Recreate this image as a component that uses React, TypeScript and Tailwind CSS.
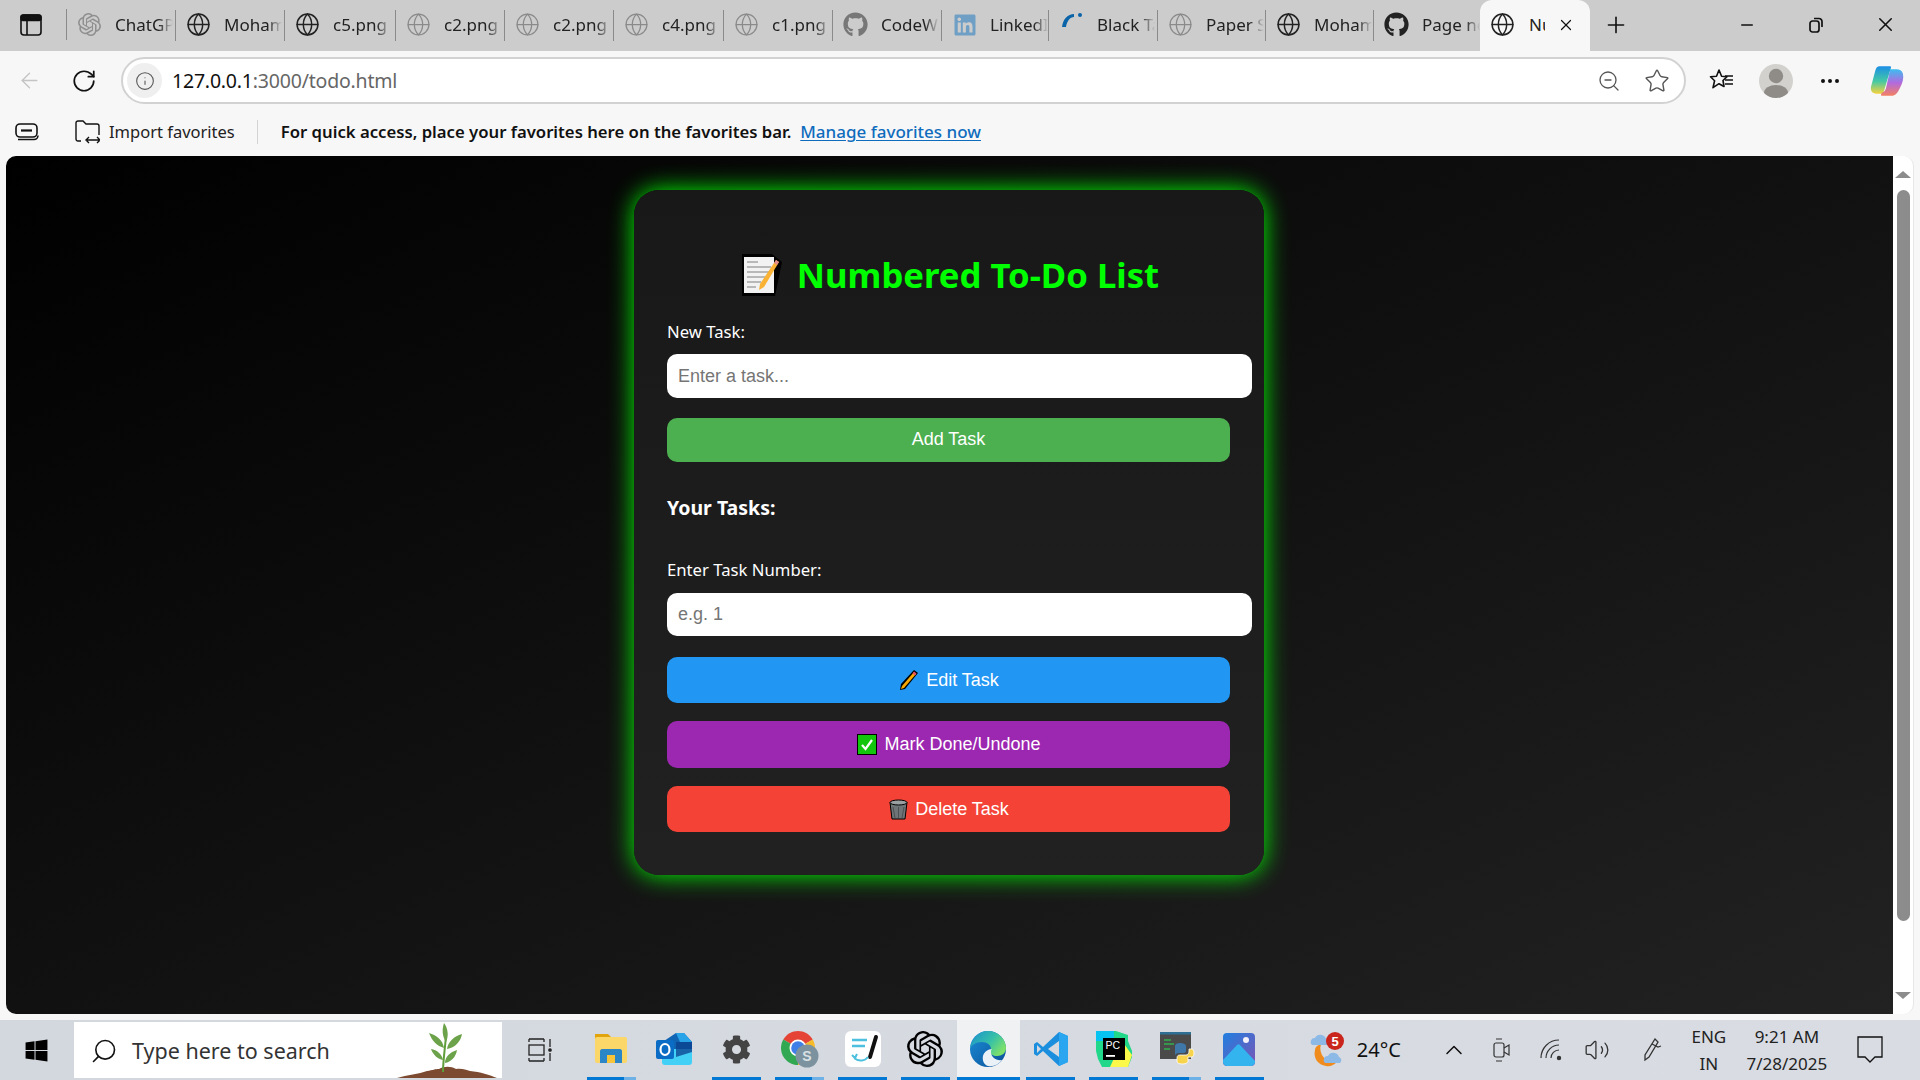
import React from 'react';
import { Globe, ArrowLeft, RotateCw, Info, ZoomOut, Star, Plus, X, Minus, Search, ChevronUp, Volume2, MoreHorizontal } from 'lucide-react';
import { FaGithub, FaLinkedin, FaWindows, FaCog } from 'react-icons/fa';
import { SiOpenai } from 'react-icons/si';

const GlobeDark = () => <Globe size={25} strokeWidth={1.4} className="text-[#222]" />;
const GlobeFaded = () => <Globe size={25} strokeWidth={1.2} className="text-[#8a8a8a]" />;

const BlackTabIcon = () => (
  <svg width="24" height="24" viewBox="0 0 24 24" className="-mt-2">
    <path d="M2 18 C3 10 8 5 14 5 L14 8 C10 8 7 12 6 18 Z" fill="#0b63a8" />
    <circle cx="20" cy="6" r="2" fill="#0b63a8" />
  </svg>
);

type Tab = { title: string; icon: React.ReactNode; width: string };

const tabs: Tab[] = [
  { title: 'ChatGPT', icon: <SiOpenai size={23} className="text-[#8f8f8f]" />, width: 'w-[109px]' },
  { title: 'Mohamed', icon: <GlobeDark />, width: 'w-[109px]' },
  { title: 'c5.png', icon: <GlobeDark />, width: 'w-[111px]' },
  { title: 'c2.png', icon: <GlobeFaded />, width: 'w-[109px]' },
  { title: 'c2.png', icon: <GlobeFaded />, width: 'w-[109px]' },
  { title: 'c4.png', icon: <GlobeFaded />, width: 'w-[110px]' },
  { title: 'c1.png', icon: <GlobeFaded />, width: 'w-[109px]' },
  { title: 'CodeWars', icon: <FaGithub size={25} className="text-[#777]" />, width: 'w-[109px]' },
  { title: 'LinkedIn', icon: <FaLinkedin size={24} className="text-[#6f9fc4]" />, width: 'w-[107px]' },
  { title: 'Black Tab', icon: <BlackTabIcon />, width: 'w-[109px]' },
  { title: 'Paper Sub', icon: <GlobeFaded />, width: 'w-[108px]' },
  { title: 'Mohamed', icon: <GlobeDark />, width: 'w-[108px]' },
  { title: 'Page not', icon: <FaGithub size={25} className="text-[#222]" />, width: 'w-[107px]' },
];

const PanelIcon = () => (
  <svg width="22" height="22" viewBox="0 0 22 22" fill="none" stroke="#111" strokeWidth="1.6">
    <rect x="1" y="1" width="20" height="20" rx="3" />
    <rect x="1" y="1" width="20" height="5.5" rx="2" fill="#111" />
    <path d="M7 6.5V21" />
  </svg>
);

const TabStrip = () => (
  <div className="flex h-[51px] shrink-0 bg-[#cccccc] text-[17px] text-[#222]">
    <div className="flex w-[67px] items-center pl-[20px] pb-[2px]">
      <PanelIcon />
      <div className="ml-[24px] h-[31px] w-[1px] bg-[#8a8a8a]" />
    </div>
    {tabs.map((t, i) => (
      <div key={i} className={`flex items-center pl-[10px] ${t.width} relative pb-[2px]`}>
        <div className="flex w-[25px] shrink-0 justify-center">{t.icon}</div>
        <span className="ml-[13px] w-[58px] overflow-hidden whitespace-nowrap [mask-image:linear-gradient(to_right,black_75%,transparent_100%)]">{t.title}</span>
        {i < tabs.length - 1 && <div className="absolute right-0 top-[10px] h-[31px] w-[1px] bg-[#8a8a8a]" />}
      </div>
    ))}
    <div className="ml-[-1px] flex h-[51px] w-[110px] items-center rounded-t-[12px] bg-[#f7f7f7] pl-[10px] pb-[2px]">
      <GlobeDark />
      <span className="ml-[14px] w-[16px] overflow-hidden whitespace-nowrap">Nu</span>
      <X size={18} strokeWidth={1.6} className="ml-[12px] text-[#111]" />
    </div>
    <div className="ml-[13px] flex items-center pb-[2px]">
      <Plus size={26} strokeWidth={1.5} className="text-[#111]" />
    </div>
    <div className="ml-auto flex items-center pb-[2px] pr-[23px]">
      <Minus size={18} strokeWidth={2} className="text-[#111]" />
      <svg width="16" height="18" viewBox="0 0 16 18" fill="none" stroke="#111" strokeWidth="1.7" className="ml-[52px]">
        <rect x="2" y="5" width="9" height="11" rx="2.5" />
        <path d="M6 2.5h5a3 3 0 0 1 3 3V11" />
      </svg>
      <X size={23} strokeWidth={1.6} className="ml-[50px] text-[#111]" />
    </div>
  </div>
);

const FavoritesStar = () => (
  <svg width="26" height="26" viewBox="0 0 26 26" fill="none" stroke="#111" strokeWidth="1.6">
    <path d="M10 2l2.6 6.2 5.4.5-4 3.8 1 6-5-2.8-6 4 1.6-7L1.5 8.7l6-.5z" strokeLinejoin="round" />
    <path d="M16 12h8M16 16h8M16 8h8" />
  </svg>
);

const Avatar = () => (
  <div className="flex h-[34px] w-[34px] items-end justify-center overflow-hidden rounded-full bg-[#d2d1ce]">
    <svg width="34" height="34" viewBox="0 0 34 34" fill="#8f8c88">
      <circle cx="17" cy="12" r="7.2" />
      <ellipse cx="17" cy="29" rx="12" ry="8" />
    </svg>
  </div>
);

const CopilotIcon = () => (
  <svg width="36" height="36" viewBox="0 0 34 34">
    <defs>
      <linearGradient id="cpA" x1="0" y1="0" x2="0" y2="1">
        <stop offset="0" stopColor="#1b8ee6" />
        <stop offset="0.55" stopColor="#45c9a4" />
        <stop offset="1" stopColor="#f6d33c" />
      </linearGradient>
      <linearGradient id="cpB" x1="0" y1="0" x2="0" y2="1">
        <stop offset="0" stopColor="#3dbdf0" />
        <stop offset="0.5" stopColor="#b06ae0" />
        <stop offset="1" stopColor="#f58060" />
      </linearGradient>
    </defs>
    <path d="M10 3h10c1 0 1 1 .6 2L14 27c-.5 1.500-1.500 2-3 2H7c-4 0-6-3-5-7l4-15c.6-2.500 2-4 4-4z" fill="url(#cpA)" />
    <path d="M20 6h6c3 0 5 1 6 4 1 4 0 9-3 14-2 4-4 7-8 7h-8c-2 0-2-1-1-3 2-.5 3-1.500 4-4z" fill="url(#cpB)" />
  </svg>
);

const Toolbar = () => (
  <div className="flex h-[59px] shrink-0 items-start bg-[#f7f7f7] pt-[6px]">
    <div className="flex h-[47px] w-[121px] shrink-0 items-center pl-[17px]">
      <ArrowLeft size={25} strokeWidth={1.3} className="text-[#c4c4c4]" />
      <RotateCw size={26} strokeWidth={1.6} className="ml-[29px] text-[#111]" />
    </div>
    <div className="flex h-[47px] w-[1565px] items-center rounded-full border-2 border-[#d2d2d2] bg-white pl-[4px]">
      <div className="flex h-[35px] w-[35px] items-center justify-center rounded-full bg-[#efefef]">
        <Info size={20} strokeWidth={1.3} className="text-[#555]" />
      </div>
      <span className="ml-[10px] pt-[1px] text-[19.5px] tracking-[-0.2px] text-[#111]">
        127.0.0.1<span className="text-[#666]">:3000/todo.html</span>
      </span>
      <div className="ml-auto flex items-center pr-[14px]">
        <ZoomOut size={24} strokeWidth={1.3} className="text-[#555]" />
        <Star size={26} strokeWidth={1.3} className="ml-[23px] text-[#555]" />
      </div>
    </div>
    <div className="flex h-[47px] flex-1 items-center pl-[23px]">
      <FavoritesStar />
      <div className="ml-[24px]"><Avatar /></div>
      <MoreHorizontal size={24} strokeWidth={2} className="ml-[25px] text-[#111]" />
      <div className="ml-[27px]"><CopilotIcon /></div>
    </div>
  </div>
);

const FavoritesBar = () => (
  <div className="flex h-[46px] shrink-0 items-center bg-[#f7f7f7] pb-[2px] text-[16.5px] text-[#222]">
    <svg width="24" height="18" viewBox="0 0 24 18" fill="none" stroke="#111" strokeWidth="1.6" className="ml-[15px]">
      <rect x="1" y="1" width="21" height="13" rx="4" />
      <path d="M6 7.500h11" strokeWidth="2.200" />
      <path d="M3 16.500h16a4 4 0 0 0 4-4" />
    </svg>
    <svg width="25" height="24" viewBox="0 0 25 24" fill="none" stroke="#111" strokeWidth="1.4" className="ml-[36px]">
      <path d="M6 21H3a2 2 0 0 1-2-2V3a2 2 0 0 1 2-2h5l3 3h11a2 2 0 0 1 2 2v9" />
      <path d="M12 20h12M14 17l-3 3 3 3M22 17l3 3-3 3" />
    </svg>
    <span className="ml-[9px]">Import favorites</span>
    <div className="ml-[22px] h-[24px] w-[1px] bg-[#d4d4d4]" />
    <span className="ml-[23px] text-[16.7px] font-semibold text-[#111]">For quick access, place your favorites here on the favorites bar.</span>
    <span className="ml-[9px] text-[17px] font-medium text-[#0f6cbd] underline underline-offset-2">Manage favorites now</span>
  </div>
);

const MemoEmoji = () => (
  <svg width="40" height="42" viewBox="0 0 40 42">
    <path d="M0 0h30l10 8-7 34H0z" fill="#000" />
    <rect x="2" y="3" width="30" height="36" fill="#f2f2f2" />
    <path d="M5 8h11M5 13h24M5 18h24M5 23h18M5 28h14M5 33h9" stroke="#b8b8b8" strokeWidth="1.800" />
    <path d="M34 6l3 2-15 25-5 3 1-6z" fill="#f9b233" />
    <path d="M34 6l3 2-2 3-3-2z" fill="#e08a8a" />
  </svg>
);

const PencilEmoji = () => (
  <svg width="20" height="22" viewBox="0 0 20 22">
    <path d="M15 1l4 3L6 20l-5 1 1-6z" fill="#000" />
    <path d="M15 3l2 2L5 19l-3 1 1-3z" fill="#f7a800" />
    <path d="M15 2.500l2.500 2-1.500 2-2.500-2z" fill="#e8506a" />
  </svg>
);

const CheckEmoji = () => (
  <svg width="20" height="21" viewBox="0 0 20 21">
    <rect x="0.500" y="0.500" width="19" height="20" fill="#12c60e" stroke="#000" />
    <path d="M5 11l3.500 4L15 6" fill="none" stroke="#fff" strokeWidth="2.200" />
  </svg>
);

const TrashEmoji = () => (
  <svg width="19" height="21" viewBox="0 0 19 21">
    <path d="M1 3.500h17L16 20H3z" fill="#6f7577" stroke="#000" />
    <ellipse cx="9.500" cy="3.500" rx="8.500" ry="2.500" fill="#9aa0a2" stroke="#000" />
    <path d="M4 8l2 11M9.500 8v11M15 8l-2 11" stroke="#4b5052" strokeWidth="1" />
  </svg>
);

const inputClass = "block w-[585px] rounded-[10px] bg-white pl-[11px] font-['Liberation_Sans',Arial,sans-serif] text-[18px] text-black placeholder:text-[#757575]";
const buttonClass = "flex w-[563px] items-center justify-center gap-[7px] rounded-[10px] font-['Liberation_Sans',Arial,sans-serif] text-[18px] text-white";

const TodoCard = () => (
  <div className="w-[630px] self-start rounded-[25px] bg-[linear-gradient(to_bottom,#181818,#212121)] px-[33px] pb-[43px] pt-[58px] shadow-[0_0_24px_#00ff00]">
    <h1 className="flex h-[54px] items-center justify-center gap-[15px] pl-[3px] text-[34.7px] font-bold text-[#00ff00]">
      <MemoEmoji />
      <span>Numbered To-Do List</span>
    </h1>
    <label htmlFor="task" className="mt-[18px] block h-[24px] text-[16.7px] leading-[24px] text-white">New Task:</label>
    <input id="task" placeholder="Enter a task..." className={`mt-[10px] h-[44px] ${inputClass}`} />
    <button className={`mt-[20px] h-[44px] bg-[#4caf50] pb-[2px] ${buttonClass}`}>Add Task</button>
    <h3 className="mt-[33px] h-[24px] pt-[1px] text-[19.5px] font-bold leading-[24px] text-white">Your Tasks:</h3>
    <label htmlFor="num" className="mt-[39px] block h-[24px] text-[16.7px] leading-[24px] text-white">Enter Task Number:</label>
    <input id="num" placeholder="e.g. 1" className={`mt-[11px] h-[43px] ${inputClass}`} />
    <button className={`mt-[21px] h-[46px] bg-[#2196f3] pl-[1px] ${buttonClass}`}><PencilEmoji />Edit Task</button>
    <button className={`mt-[18px] h-[47px] bg-[#9c27b0] pl-[1px] ${buttonClass}`}><CheckEmoji />Mark Done/Undone</button>
    <button className={`mt-[18px] h-[46px] bg-[#f44336] pl-[1px] ${buttonClass}`}><TrashEmoji />Delete Task</button>
  </div>
);

const Scrollbar = () => (
  <div className="flex w-[21px] shrink-0 flex-col items-center rounded-r-[10px] border-r border-[#e6e6e6] bg-white pt-[15px] pb-[15px]">
    <div className="h-0 w-0 border-x-[8px] border-b-[7px] border-x-transparent border-b-[#8c8c8c]" />
    <div className="mt-[12px] h-[731px] w-[13px] rounded-full bg-[#8c8c8c]" />
    <div className="mt-auto h-0 w-0 border-x-[8px] border-t-[7px] border-x-transparent border-t-[#8c8c8c]" />
  </div>
);

const Viewport = () => (
  <div className="flex h-[858px] shrink-0 pl-[6px] pr-[6px]">
    <main className="flex flex-1 justify-center overflow-hidden rounded-l-[10px] bg-[linear-gradient(to_bottom_right,#000000,#222222)] pr-[1px] pt-[34px]">
      <TodoCard />
    </main>
    <Scrollbar />
  </div>
);

const Explorer = () => (
  <svg width="34" height="34" viewBox="0 0 34 34">
    <path d="M1 2h13l3 3v6H1z" fill="#e2a40c" />
    <rect x="1" y="5" width="32" height="26" rx="2" fill="#fbd669" />
    <path d="M6 31V19c0-1 1-2 2-2h18c1 0 2 1 2 2v12h-7v-8h-8v8z" fill="#2b86c8" />
    <rect x="13" y="23" width="8" height="8" fill="#f8c53a" />
  </svg>
);

const Outlook = () => (
  <svg width="36" height="32" viewBox="0 0 36 32">
    <path d="M8 8L20 0h8l8 9v10H8z" fill="#0f64b4" />
    <path d="M20 0h8l8 9H24z" fill="#29a3e8" />
    <path d="M6 16h30v13c0 2-1 3-3 3H9c-2 0-3-1-3-3z" fill="#42d0f7" />
    <path d="M20 9h16v10L20 24z" fill="#0b3f8c" opacity="0.75" />
    <rect x="0" y="7" width="18" height="19" rx="2" fill="#0a6cc4" />
    <ellipse cx="9" cy="16.500" rx="4.500" ry="5.500" fill="none" stroke="#fff" strokeWidth="2.200" />
  </svg>
);

const Chrome = () => (
  <svg width="40" height="38" viewBox="0 0 40 38">
    <path d="M18 18L3.300 9.500A17 17 0 0 1 32.700 9.500Z" fill="#e54335" />
    <path d="M18 18L32.700 9.500A17 17 0 0 1 18 35Z" fill="#f7bb2a" />
    <path d="M18 18L18 35A17 17 0 0 1 3.300 9.500Z" fill="#32a853" />
    <circle cx="18" cy="18" r="8.500" fill="#fff" />
    <circle cx="18" cy="18" r="6.800" fill="#3f7fe8" />
    <circle cx="27" cy="26" r="11.500" fill="#7c929f" />
    <text x="27" y="31" textAnchor="middle" fontSize="14" fontWeight="700" fill="#d9e0e4" fontFamily="Liberation Sans">S</text>
  </svg>
);

const NotesIcon = () => (
  <svg width="36" height="36" viewBox="0 0 36 36">
    <rect width="36" height="36" rx="6" fill="#fff" />
    <path d="M7 9h15M7 15h13" stroke="#4cc0de" strokeWidth="2.400" />
    <path d="M25 26L31 6" stroke="#111" strokeWidth="4" strokeLinecap="round" />
    <path d="M7 24l3 3 2-4M9 27c5 4 11 3 14-1" fill="none" stroke="#4cc0de" strokeWidth="2" />
  </svg>
);

const Edge = () => (
  <svg width="36" height="36" viewBox="0 0 36 36">
    <defs>
      <linearGradient id="edA" x1="0" y1="0" x2="1" y2="0.600">
        <stop offset="0" stopColor="#1a8fd0" />
        <stop offset="0.6" stopColor="#36c0a8" />
        <stop offset="1" stopColor="#7de06a" />
      </linearGradient>
      <linearGradient id="edB" x1="0" y1="0" x2="1" y2="1">
        <stop offset="0" stopColor="#1a8fd8" />
        <stop offset="1" stopColor="#0c4f96" />
      </linearGradient>
    </defs>
    <circle cx="18" cy="18" r="18" fill="url(#edB)" />
    <path d="M0 17C2 6 10 0 18 0c10 0 18 8 18 17 0 5-4 8-9 8-4 0-7-2-7-4 0-1 1-1 1-3 0-4-4-7-9-7-6 0-10 3-12 6z" fill="url(#edA)" />
    <path d="M21 21c0 5 5 9 11 8-3 4-8 7-14 6-4-1-6-6-5-10 1-4 5-7 9-7-1 1-1 2-1 3z" fill="#eaf2f8" />
  </svg>
);

const VsCode = () => (
  <svg width="36" height="36" viewBox="0 0 36 36">
    <path d="M26 1l9 4v26l-9 4L10 20l-6 5-3-2v-10l3-2 6 5z" fill="#1b8fdd" />
    <path d="M26 1l9 4v26l-9 4z" fill="#2aa5f0" />
    <path d="M26 10L15 18l11 8z" fill="#d6d9e0" />
    <path d="M4 14v8l4-4z" fill="#d6d9e0" />
  </svg>
);

const PyCharm = () => (
  <svg width="36" height="36" viewBox="0 0 36 36">
    <path d="M0 0h20l12 4v6l4 10v6l-4 10H6L2 28 0 20z" fill="#21d789" />
    <path d="M0 0h18v10H0z" fill="#07c3f2" />
    <path d="M26 10l10 14-4 12H14z" fill="#fcf84a" />
    <rect x="7" y="7" width="22" height="22" fill="#000" />
    <text x="9.500" y="18" fontSize="10.500" fill="#fff" fontFamily="Liberation Sans">PC</text>
    <rect x="10" y="24" width="9" height="1.800" fill="#fff" />
  </svg>
);

const PythonIdle = () => (
  <svg width="36" height="36" viewBox="0 0 36 36">
    <rect x="1" y="1" width="31" height="27" fill="#4a4a4a" />
    <rect x="1" y="1" width="31" height="2.500" fill="#2f6f93" />
    <path d="M5 9h7M5 13h10M5 18h6" stroke="#2fb04e" strokeWidth="1.400" />
    <path d="M16 19v-4c0-2 2-3 5-3s6 1 6 3v5c0 1-1 2-2 2h-5c-2 0-4 1-4 3z" fill="#3f77a8" />
    <path d="M33 18c1 0 2 2 2 4s-1 4-2 4h-4v-0l0 4c0 2-3 3-6 3s-5-1-5-3v-3c0-2 1-3 3-3h6c2 0 3-2 3-4v-2z" fill="#f8d44c" stroke="#fff" strokeWidth="0.800" />
  </svg>
);

const Photos = () => (
  <svg width="32" height="33" viewBox="0 0 32 33">
    <defs>
      <linearGradient id="phA" x1="0" y1="0" x2="1" y2="1">
        <stop offset="0" stopColor="#1f7fe0" />
        <stop offset="1" stopColor="#7b55b5" />
      </linearGradient>
    </defs>
    <rect width="32" height="33" rx="4" fill="url(#phA)" />
    <circle cx="23" cy="7" r="3" fill="#f3f1fb" />
    <path d="M0 27l14-15c1-1 2-1 3 0l15 16v1c0 2-2 4-4 4H4c-2 0-4-2-4-4z" fill="#34b4ef" />
  </svg>
);

const WeatherIcon = () => (
  <svg width="38" height="36" viewBox="0 0 38 36">
    <path d="M13 12a14 14 0 0 0 16 18c-3 3-7 5-11 4C10 33 5 26 7 18c0-3 3-5 6-6z" fill="#f08c1e" />
    <path d="M4 13a4 4 0 0 1 3-7 6 6 0 0 1 11 1 3.500 3.500 0 0 1 1 6z" fill="#8db9e6" />
    <path d="M17 31a4 4 0 0 1 3-7 6 6 0 0 1 11 1 3.500 3.500 0 0 1 1 6z" fill="#8db9e6" />
    <circle cx="27" cy="9" r="9" fill="#c9251d" />
    <text x="27" y="14" textAnchor="middle" fontSize="13" fontWeight="700" fill="#fff" fontFamily="Liberation Sans">5</text>
  </svg>
);

const Plant = () => (
  <svg width="100" height="56" viewBox="0 0 100 56">
    <path d="M0 56c10-3 22-4 30-7 6-1 8-2 12-2 5-3 12-3 17 0 6-1 10 1 14 2 10 1 20 4 27 7z" fill="#7b4a30" />
    <path d="M46 50c0-10 2-24 3-36" stroke="#5f9e3a" strokeWidth="2" fill="none" />
    <path d="M49 20c-4-6-4-13-2-19 4 5 5 13 2 19zM47 26c-7-2-12-7-15-15 7 2 14 7 15 15zM50 27c1-7 7-13 15-15-1 7-7 14-15 15zM46 38c-5-1-10-5-12-11 6 1 11 5 12 11zM48 41c0-6 5-11 12-13-1 7-6 12-12 13z" fill="#6ca24a" />
  </svg>
);

const WifiCorner = () => (
  <svg width="24" height="24" viewBox="0 0 24 24" fill="none" stroke="#333" strokeWidth="1.200">
    <path d="M2 20A18 18 0 0 1 20 2" />
    <path d="M7 20A13 13 0 0 1 20 7" />
    <path d="M12 20a8 8 0 0 1 8-8" />
    <circle cx="20" cy="20" r="1.600" fill="#333" />
  </svg>
);

type Pin = { icon: React.ReactNode; split?: boolean; none?: boolean; active?: boolean };

const pins: Pin[] = [
  { icon: <Explorer />, split: true },
  { icon: <Outlook />, none: true },
  { icon: <FaCog size={29} className="text-[#444]" /> },
  { icon: <Chrome />, split: true },
  { icon: <NotesIcon /> },
  { icon: <SiOpenai size={36} className="text-black" /> },
  { icon: <Edge />, active: true },
  { icon: <VsCode /> },
  { icon: <PyCharm /> },
  { icon: <PythonIdle />, split: true },
  { icon: <Photos /> },
];

const TaskView = () => (
  <svg width="26" height="24" viewBox="0 0 26 24" fill="none" stroke="#222" strokeWidth="1.300">
    <path d="M1 1h15M1 23h15M1 20V23M16 20V23M1 1V4M16 1V4" />
    <rect x="1" y="7" width="15" height="10" />
    <path d="M22 1v8M22 15v8" />
    <circle cx="22" cy="12" r="1.200" fill="#222" />
  </svg>
);

const Taskbar = () => (
  <div className="flex h-[60px] shrink-0 bg-[linear-gradient(to_right,#d3d7de,#d9dce3)] text-[#222]">
    <div className="flex w-[74px] shrink-0 items-center justify-center pr-[2px]">
      <FaWindows size={25} className="text-black" />
    </div>
    <div className="mb-[2px] mt-[2px] flex w-[428px] shrink-0 items-center justify-between overflow-hidden bg-white pl-[16px] pr-[5px]">
      <div className="flex items-center pt-[2px]">
        <Search size={28} strokeWidth={1.4} className="-scale-x-100 text-[#111]" />
        <span className="ml-[14px] text-[21.5px] text-[#333]">Type here to search</span>
      </div>
      <Plant />
    </div>
    <div className="flex w-[78px] shrink-0 items-center justify-center"><TaskView /></div>
    <div className="flex">
      {pins.map((p, i) => (
        <div key={i} className={`relative flex h-[60px] w-[62.8px] items-center justify-center pb-[2px] ${p.active ? 'bg-[#f0f1f3]' : ''}`}>
          {p.icon}
          {!p.none && (
            <div className={`absolute bottom-0 flex h-[3px] ${p.active ? 'w-full' : 'w-[49px]'}`}>
              <div className="flex-1 bg-[#0078d4]" />
              {p.split && <div className="w-[12px] bg-[#6db1e6]" />}
            </div>
          )}
        </div>
      ))}
    </div>
    <div className="ml-[37px] flex items-center">
      <WeatherIcon />
      <span className="ml-[11px] text-[20px] text-[#111]">24°C</span>
      <ChevronUp size={28} strokeWidth={1.3} className="ml-[39px] text-[#111]" />
      <svg width="18" height="26" viewBox="0 0 18 26" fill="none" stroke="#333" strokeWidth="1.200" className="ml-[25px]">
        <rect x="1" y="6" width="10" height="14" rx="2" />
        <path d="M11 11l5-3v10l-5-3M3 2h6M3 24h6" />
      </svg>
      <div className="ml-[28px]"><WifiCorner /></div>
      <Volume2 size={26} strokeWidth={1.2} className="ml-[21px] text-[#333]" />
      <svg width="22" height="26" viewBox="0 0 22 26" fill="none" stroke="#333" strokeWidth="1.300" className="ml-[31px]">
        <path d="M14 2l3 3-9 15-4 3 0-5zM11 7l6 3 3-1" />
      </svg>
    </div>
    <div className="ml-[25px] flex w-[42px] flex-col items-center text-[17px] leading-[27px] text-[#222]">
      <span className="pt-[3px]">ENG</span>
      <span>IN</span>
    </div>
    <div className="ml-[12px] flex w-[90px] flex-col items-center text-[17px] leading-[27px] text-[#222]">
      <span className="pt-[3px]">9:21 AM</span>
      <span>7/28/2025</span>
    </div>
    <div className="ml-[25px] flex items-center">
      <svg width="26" height="28" viewBox="0 0 26 28" fill="none" stroke="#111" strokeWidth="1.300">
        <path d="M1 1h24v20h-7l-5 5-5-5H1z" />
      </svg>
    </div>
  </div>
);

export default function App() {
  return (
    <div className="flex h-[1080px] w-[1920px] flex-col overflow-hidden bg-[#f7f7f7] font-['Noto_Sans',sans-serif]">
      <TabStrip />
      <Toolbar />
      <FavoritesBar />
      <Viewport />
      <div className="h-[6px] shrink-0" />
      <Taskbar />
    </div>
  );
}
